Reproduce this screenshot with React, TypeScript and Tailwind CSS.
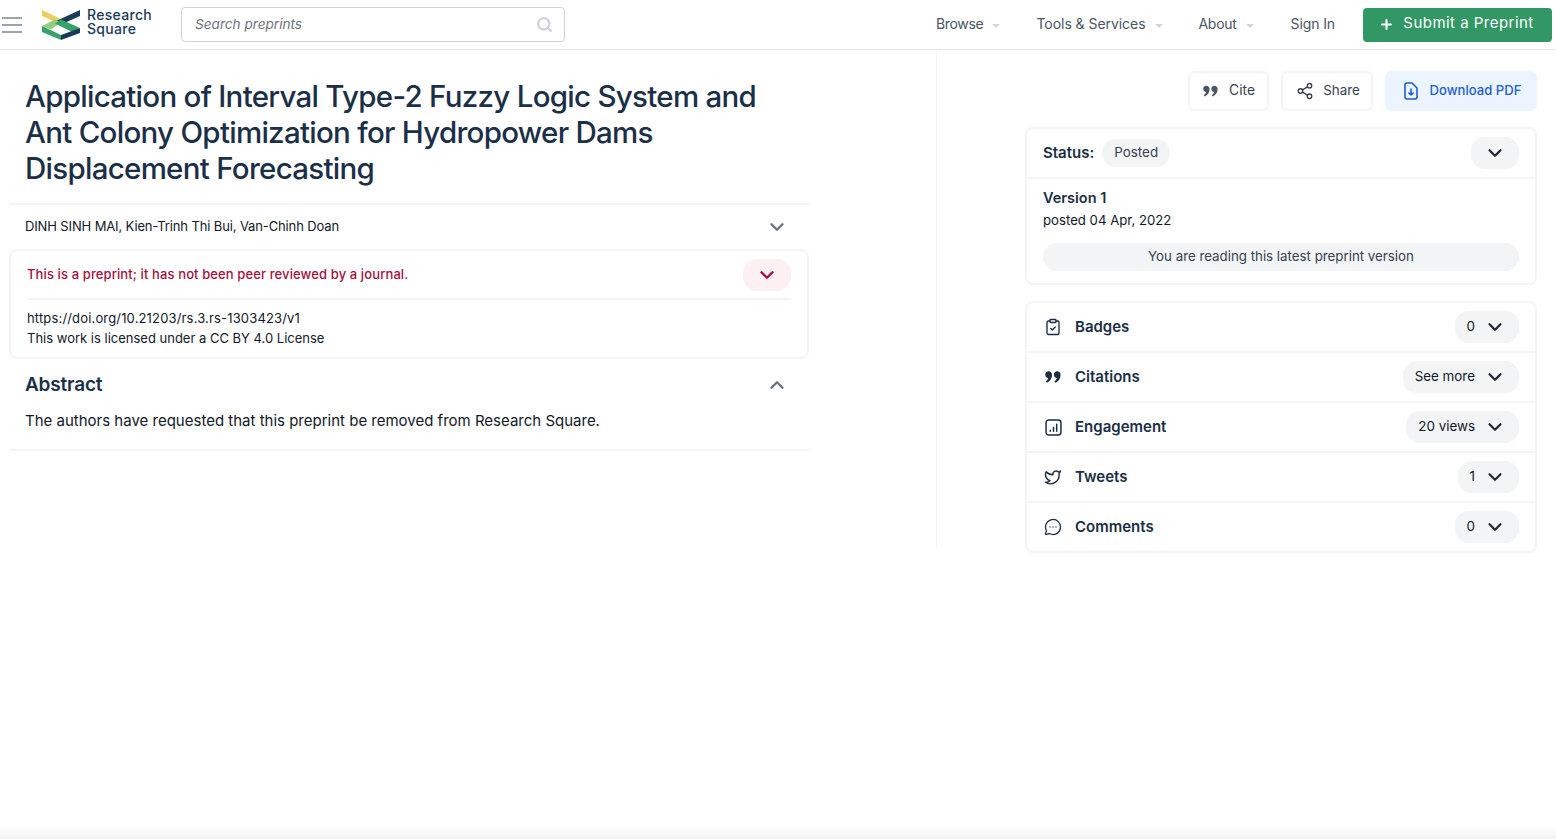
import { ChevronDown, ChevronUp, Plus, Search, Share2, ClipboardCheck, Twitter, MessageCircleMore } from "lucide-react";
import React from "react";

const Quote = ({ className }: { className?: string }) => (
  <svg viewBox="0 0 16 12" className={className} fill="currentColor">
    <path d="M0.3 3.6C0.3 1.6 1.8 0.3 3.6 0.3C5.6 0.3 7 1.8 7 4C7 7.6 4.6 10.4 1.9 11.8L0.8 10.5C2.1 9.5 3 8.4 3.2 7.1C1.5 7 0.3 5.6 0.3 3.6Z" />
    <path d="M8.9 3.6C8.9 1.6 10.4 0.3 12.2 0.3C14.2 0.3 15.6 1.8 15.6 4C15.6 7.6 13.2 10.4 10.5 11.8L9.4 10.5C10.7 9.5 11.6 8.4 11.8 7.1C10.1 7 8.9 5.6 8.9 3.6Z" />
  </svg>
);

const Logo = () => (
  <svg width="38" height="30" viewBox="0 0 38 30" className="shrink-0">
    <polygon points="0,0 18,8.5 18,14 0,6" fill="#ecc94b" opacity="0.9" />
    <polygon points="38,0 38,6 19,14.5 13,11.5" fill="#1a3a5a" />
    <polygon points="0,16 13,9.5 19,12.5 9,19.5 0,16" fill="#8fd07f" />
    <polygon points="19,9.5 38,18 30,22 13,13.5" fill="#38a169" />
    <polygon points="38,18 38,23 19,30 19,25" fill="#1a3a5a" />
    <polygon points="0,16 19,25 19,30 0,22" fill="#38a169" />
  </svg>
);

const Caret = () => <span className="ml-[9px] mt-[3px] inline-block h-0 w-0 border-x-[4px] border-t-[4px] border-x-transparent border-t-[#d1d5db]" />;

const NavItem = ({ label, caret = true, cls = "" }: { label: string; caret?: boolean; cls?: string }) => (
  <div className={`flex items-center text-[14px] leading-[20px] text-[#4b5563] ${cls}`}>
    <span className="pb-[2px]">{label}</span>
    {caret && <Caret />}
  </div>
);

const Row = ({ icon, label, value, last }: { icon: React.ReactNode; label: string; value: string; last?: boolean }) => (
  <div className={`flex items-center justify-between px-[16px] ${last ? "h-[48px]" : "h-[50px] border-b-2 border-[#f3f4f6]"}`}>
    <div className="flex items-center">
      <span className="flex w-[20px] justify-center text-[#1a2e44]">{icon}</span>
      <span className="ml-[12px] text-[15px] font-semibold text-[#1a2e44]">{label}</span>
    </div>
    <div className="flex h-[32px] items-center rounded-[14px] bg-[#f3f4f6] pl-[12px] pr-[13px] text-[13.4px] text-[#111827]">
      <span className="mr-[9px] pb-[2px]">{value}</span>
      <ChevronDown size={22} strokeWidth={2.4} className="text-[#1f2937]" />
    </div>
  </div>
);

export default function App() {
  return (
    <div className="relative min-h-[839px] bg-white" style={{ fontFamily: "Inter, 'Liberation Sans', sans-serif" }}>
      <header className="flex h-[50px] items-center border-b border-[#e5e7eb] pl-[2px] pr-[4px]">
        <div className="flex w-[20px] flex-col gap-[5px]">
          <span className="h-[2px] bg-[#9ca3af]" />
          <span className="h-[2px] bg-[#9ca3af]" />
          <span className="h-[2px] bg-[#9ca3af]" />
        </div>
        <div className="ml-[20px] flex items-center">
          <Logo />
          <div className="ml-[7px] pb-[6px] text-[14px] font-medium leading-[14px] tracking-[0.3px] text-[#1a3a5a]">
            <div>Research</div>
            <div>Square</div>
          </div>
        </div>
        <div className="ml-[29px] flex h-[35px] w-[384px] items-center justify-between rounded border border-[#cbd5e0] pl-[13px] pr-[11px]">
          <span className="text-[13.6px] italic text-[#6b7280]">Search preprints</span>
          <Search size={17} strokeWidth={3.4} className="text-[#d1d5db]" />
        </div>
        <nav className="ml-auto flex items-center">
          <NavItem label="Browse" cls="tracking-[-0.3px]" />
          <div className="ml-[36px]"><NavItem label="Tools & Services" cls="tracking-[-0.05px]" /></div>
          <div className="ml-[36px]"><NavItem label="About" cls="tracking-[-0.3px]" /></div>
          <div className="ml-[37px]"><NavItem label="Sign In" caret={false} cls="tracking-[-0.1px]" /></div>
          <div className="ml-[28px] flex h-[34px] w-[189px] items-center justify-center rounded bg-[#319764] pr-[2px] text-[15px] tracking-[0.47px] text-white">
            <Plus size={15} strokeWidth={3.4} className="mr-[9px]" />
            <span className="pb-[2px]">Submit a Preprint</span>
          </div>
        </nav>
      </header>

      <main className="flex">
        <section className="h-[498px] w-[937px] shrink-0 border-r border-[#f3f4f6] pl-[9px]">
          <div className="w-[800px]">
            <h1 className="px-[16px] pb-[17px] pt-[28px] text-[29.5px] font-medium leading-[36px] tracking-[-0.72px] text-[#1b2f48]">
              Application of Interval Type-2 Fuzzy Logic System and Ant Colony Optimization for Hydropower Dams Displacement Forecasting
            </h1>
            <div className="flex h-[46px] items-center justify-between border-t-2 border-[#f3f4f6] pl-[16px] pr-[21px] text-[13px] tracking-[-0.13px] text-[#111827]">
              <span>DINH SINH MAI, Kien-Trinh Thi Bui, Van-Chinh Doan</span>
              <ChevronDown size={22} strokeWidth={2.6} className="text-[#6b7280]" />
            </div>
            <div className="rounded-lg border-2 border-[#f3f4f6] px-[16px]">
              <div className="flex h-[49px] items-center justify-between border-b-2 border-[#f3f4f6]">
                <span className="text-[13px] font-medium tracking-[0.11px] text-[#a50f3c]">This is a preprint; it has not been peer reviewed by a journal.</span>
                <span className="flex h-[32px] w-[48px] items-center justify-center rounded-[14px] bg-[#fdf0f2]">
                  <ChevronDown size={22} strokeWidth={2.6} className="text-[#a50f3c]" />
                </span>
              </div>
              <div className="pb-[9px] pt-[8px] text-[13px] leading-[20px] text-[#111827]">
                <div className="tracking-[0.16px]">https://doi.org/10.21203/rs.3.rs-1303423/v1</div>
                <div>This work is licensed under a CC BY 4.0 License</div>
              </div>
            </div>
            <div className="border-b-2 border-[#f3f4f6] pb-[16px] pl-[16px] pr-[21px] pt-[14px]">
              <div className="flex items-center justify-between">
                <h2 className="text-[19px] font-semibold leading-[24px] tracking-[-0.2px] text-[#1b2f48]">Abstract</h2>
                <ChevronUp size={22} strokeWidth={2.6} className="text-[#6b7280]" />
              </div>
              <p className="mt-[12px] text-[15px] leading-[24px] text-[#111827]">
                The authors have requested that this preprint be removed from Research Square.
              </p>
            </div>
          </div>
        </section>

        <aside className="ml-[88px] w-[512px] shrink-0 pt-[21px]">
          <div className="flex justify-end gap-[12px]">
            <div className="flex h-[40px] w-[81px] items-center justify-center rounded-md border-2 border-[#f3f4f6] text-[13.8px] text-[#374151]">
              <Quote className="ml-[1px] mr-[11px] h-[12px] w-[15px] text-[#4b5563]" />
              <span className="pb-[2px]">Cite</span>
            </div>
            <div className="flex h-[40px] w-[92px] items-center justify-center rounded-md border-2 border-[#f3f4f6] text-[13.4px] text-[#374151]">
              <Share2 size={18} strokeWidth={1.8} className="ml-[2px] mr-[9px] text-[#374151]" />
              <span className="pb-[2px]">Share</span>
            </div>
            <div className="flex h-[40px] w-[152px] items-center justify-center rounded-md bg-[#ebf4ff] text-[13.1px] font-medium text-[#1d5fd1]">
              <svg viewBox="0 0 16 18" className="ml-[2px] mr-[11px] h-[18px] w-[16px]" fill="none" stroke="currentColor" strokeWidth="1.6" strokeLinecap="round" strokeLinejoin="round">
                <path d="M2 3a2 2 0 0 1 2-2h5l5 5v9a2 2 0 0 1-2 2H4a2 2 0 0 1-2-2z" />
                <path d="M8 7v6M5.8 11L8 13l2.2-2" />
              </svg>
              <span className="pb-[1px]">Download PDF</span>
            </div>
          </div>

          <div className="mt-[16px] rounded-lg border-2 border-[#f3f4f6]">
            <div className="flex h-[50px] items-center justify-between border-b-2 border-[#f3f4f6] px-[16px]">
              <div className="flex items-center">
                <span className="text-[15px] font-semibold text-[#1a2e44]">Status:</span>
                <span className="ml-[8px] flex h-[28px] items-center rounded-[14px] bg-[#f3f4f6] px-[12px] pb-[2px] text-[13.4px] text-[#374151]">Posted</span>
              </div>
              <span className="flex h-[32px] w-[48px] items-center justify-center rounded-[14px] bg-[#f3f4f6]">
                <ChevronDown size={22} strokeWidth={2.4} className="text-[#1f2937]" />
              </span>
            </div>
            <div className="px-[16px] pb-[12px] pt-[8px]">
              <div className="text-[14.5px] font-semibold leading-[22px] text-[#1a2e44]">Version 1</div>
              <div className="text-[13.2px] leading-[22px] text-[#111827]">posted 04 Apr, 2022</div>
              <div className="mt-[12px] flex h-[28px] items-center justify-center rounded-[14px] bg-[#f3f4f6] text-[13.3px] text-[#374151]">
                You are reading this latest preprint version
              </div>
            </div>
          </div>

          <div className="mt-[16px] rounded-lg border-2 border-[#f3f4f6]">
            <Row icon={<ClipboardCheck size={18} strokeWidth={1.8} />} label="Badges" value="0" />
            <Row icon={<Quote className="h-[12px] w-[16px]" />} label="Citations" value="See more" />
            <Row
              icon={
                <svg viewBox="0 0 16 16" className="h-[17px] w-[17px]" fill="none" stroke="currentColor" strokeWidth="1.4" strokeLinecap="round">
                  <rect x="1" y="1" width="14" height="14" rx="2.5" />
                  <path d="M5 11.5v-1M8 11.5V8M11 11.5V5" />
                </svg>
              }
              label="Engagement"
              value="20 views"
            />
            <Row icon={<Twitter size={18} strokeWidth={1.9} />} label="Tweets" value="1" />
            <Row icon={<MessageCircleMore size={18} strokeWidth={1.7} />} label="Comments" value="0" last />
          </div>
        </aside>
      </main>
      <div className="absolute bottom-0 left-0 right-0 h-[14px] bg-linear-to-t from-[#f3f3f3] to-white/0" />
    </div>
  );
}
